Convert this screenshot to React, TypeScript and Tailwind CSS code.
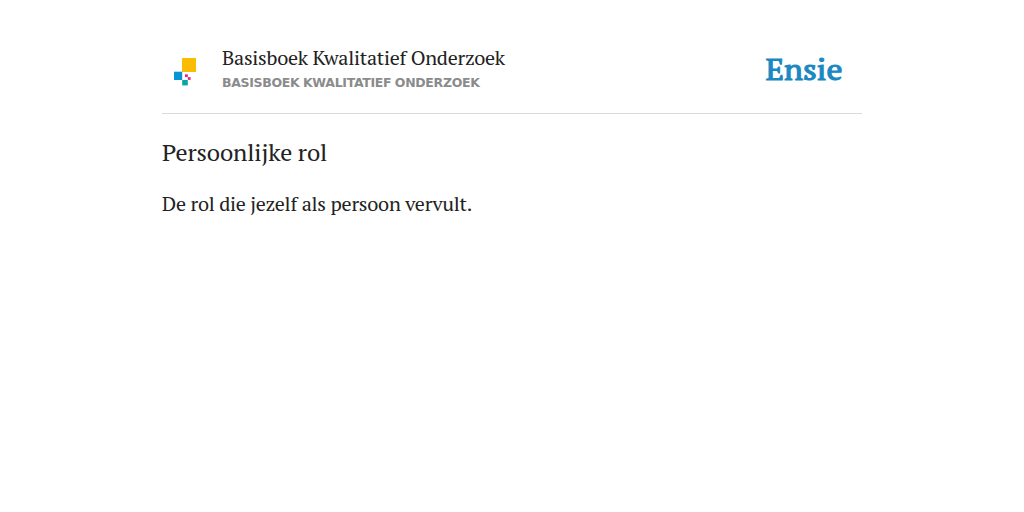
function BookIcon() {
  return (
    <svg width="60" height="60" viewBox="0 0 60 60" className="shrink-0">
      <rect x="20" y="16" width="14" height="14" fill="#fbbc05" />
      <rect x="12" y="29.7" width="8.2" height="8.3" fill="#0894d3" />
      <rect x="20.2" y="38" width="5.6" height="5.4" fill="#0aa5a0" />
      <rect x="23" y="32.3" width="2.8" height="2.8" fill="#e5268a" />
      <rect x="25.8" y="35.1" width="2.8" height="2.8" fill="#e5268a" />
    </svg>
  );
}

function EnsieLogo() {
  return (
    <svg width="90" height="44" viewBox="0 0 90 44" role="img" aria-label="Ensie">
      <text x="6.5" y="33" textLength="77" lengthAdjust="spacingAndGlyphs" fontSize="30" fill="#1c88c1" stroke="#1c88c1" strokeWidth="1.1" className="font-['PT_Serif','DejaVu_Serif_Condensed',serif]">
        Ensie
      </text>
    </svg>
  );
}

export default function App() {
  return (
    <div className="min-h-screen bg-white text-[#222]">
      <div className="mx-auto w-[700px] pt-[42px] font-['PT_Serif','DejaVu_Serif_Condensed',serif]">
        <header className="flex h-[72px] items-start border-b border-[#d9d9de]">
          <BookIcon />
          <div className="flex-1 whitespace-nowrap">
            <div className="pt-0.5 text-[20px] leading-7 tracking-[-0.25px]">Basisboek Kwalitatief Onderzoek</div>
            <div className="pt-[3px] font-['DejaVu_Sans',sans-serif] text-[12.5px] leading-4 font-bold tracking-[-0.31px] [word-spacing:-0.5px] text-[#8b8b8b] uppercase">
              Basisboek Kwalitatief Onderzoek
            </div>
          </div>
          <div className="mr-[13px] pt-[5px]">
            <EnsieLogo />
          </div>
        </header>

        <h1 className="mt-[22px] text-[24px] leading-8 tracking-[-0.12px]">Persoonlijke rol</h1>
        <p className="mt-[22px] text-[20px] leading-7 tracking-[-0.22px]">De rol die jezelf als persoon vervult.</p>
      </div>
    </div>
  );
}
